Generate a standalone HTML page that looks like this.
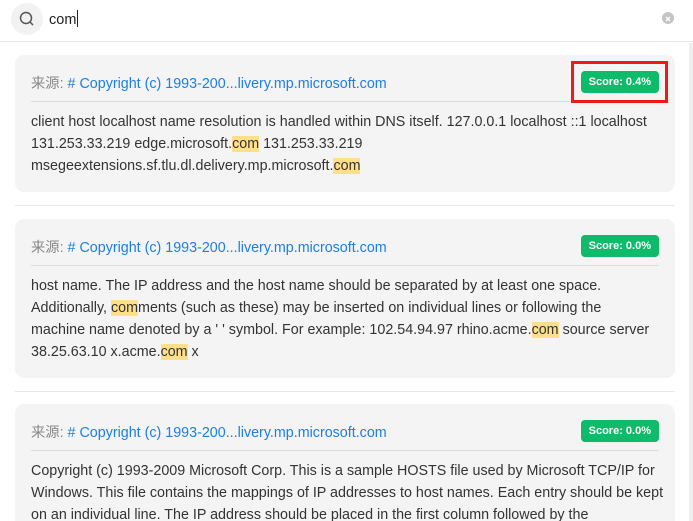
<!DOCTYPE html>
<html><head><meta charset="utf-8"><style>
*{margin:0;padding:0;box-sizing:border-box}
html,body{width:693px;height:521px;overflow:hidden}
body{background:#fff;font-family:"Liberation Sans","Noto Sans CJK SC",sans-serif;position:relative;color:#333}
.top{position:absolute;left:0;top:0;width:693px;height:42px;border-bottom:1px solid #e6e6e6}
.sicon{position:absolute;left:11px;top:3px;width:32px;height:32px;border-radius:50%;background:#f2f2f2}
.q{position:absolute;left:49px;top:10px;font-size:14.5px;color:#222}
.q:after{content:"";display:inline-block;width:1px;height:17px;background:#222;vertical-align:-3px;margin-left:1px}
.clear{position:absolute;left:662px;top:12px;width:12px;height:12px;border-radius:50%;background:#c4c4c4}
.sb{position:absolute;left:689px;top:43px;width:4px;height:478px;background:#efefef}
.card{position:absolute;left:15px;width:660px;background:#f4f4f4;border-radius:9px;padding:0 16px;overflow:hidden}
.hd{height:47px;border-bottom:1px solid #dedede;position:relative;font-size:14.3px;padding-top:17px;white-space:nowrap}
.hd .l{color:#888}.hd a{color:#1e7fe0;text-decoration:none}
.badge{position:absolute;right:0;top:16px;background:#0dbb6a;color:#fff;font-size:11px;font-weight:bold;border-radius:4px;padding:5px 8px;line-height:12px}
.tx{font-size:14.3px;line-height:22px;padding-top:9px;color:#333;white-space:nowrap}
.hl{background:#ffe08a}
.sep{position:absolute;left:15px;width:660px;height:1px;background:#e8e8e8}
.red{position:absolute;left:571px;top:61px;width:97px;height:42px;border:3px solid #f01818}
</style></head><body>
<div class="top"><div class="sicon"><svg width="32" height="32"><circle cx="15" cy="15" r="5.5" fill="none" stroke="#555" stroke-width="1.5"/><line x1="19" y1="19" x2="22" y2="22" stroke="#555" stroke-width="1.5"/></svg></div>
<div class="q">com</div><div class="clear"><svg width="12" height="12"><path d="M4 4L8 8M8 4L4 8" stroke="#fff" stroke-width="1.3"/></svg></div></div>
<div class="sb"></div>
<div class="card" style="top:55px;height:137px"><div class="hd"><span class="l">来源: </span><a># Copyright (c) 1993-200...livery.mp.microsoft.com</a><span class="badge">Score: 0.4%</span></div>
<div class="tx">client host localhost name resolution is handled within DNS itself. 127.0.0.1 localhost ::1 localhost<br>131.253.33.219 edge.microsoft.<span class="hl">com</span> 131.253.33.219<br>msegeextensions.sf.tlu.dl.delivery.mp.microsoft.<span class="hl">com</span></div></div>
<div class="red"></div>
<div class="sep" style="top:205px"></div>
<div class="card" style="top:219px;height:159px"><div class="hd"><span class="l">来源: </span><a># Copyright (c) 1993-200...livery.mp.microsoft.com</a><span class="badge">Score: 0.0%</span></div>
<div class="tx">host name. The IP address and the host name should be separated by at least one space.<br>Additionally, <span class="hl">com</span>ments (such as these) may be inserted on individual lines or following the<br>machine name denoted by a ' ' symbol. For example: 102.54.94.97 rhino.acme.<span class="hl">com</span> source server<br>38.25.63.10 x.acme.<span class="hl">com</span> x</div></div>
<div class="sep" style="top:391px"></div>
<div class="card" style="top:404px;height:140px"><div class="hd"><span class="l">来源: </span><a># Copyright (c) 1993-200...livery.mp.microsoft.com</a><span class="badge">Score: 0.0%</span></div>
<div class="tx">Copyright (c) 1993-2009 Microsoft Corp. This is a sample HOSTS file used by Microsoft TCP/IP for<br>Windows. This file contains the mappings of IP addresses to host names. Each entry should be kept<br>on an individual line. The IP address should be placed in the first column followed by the</div></div>
</body></html>
